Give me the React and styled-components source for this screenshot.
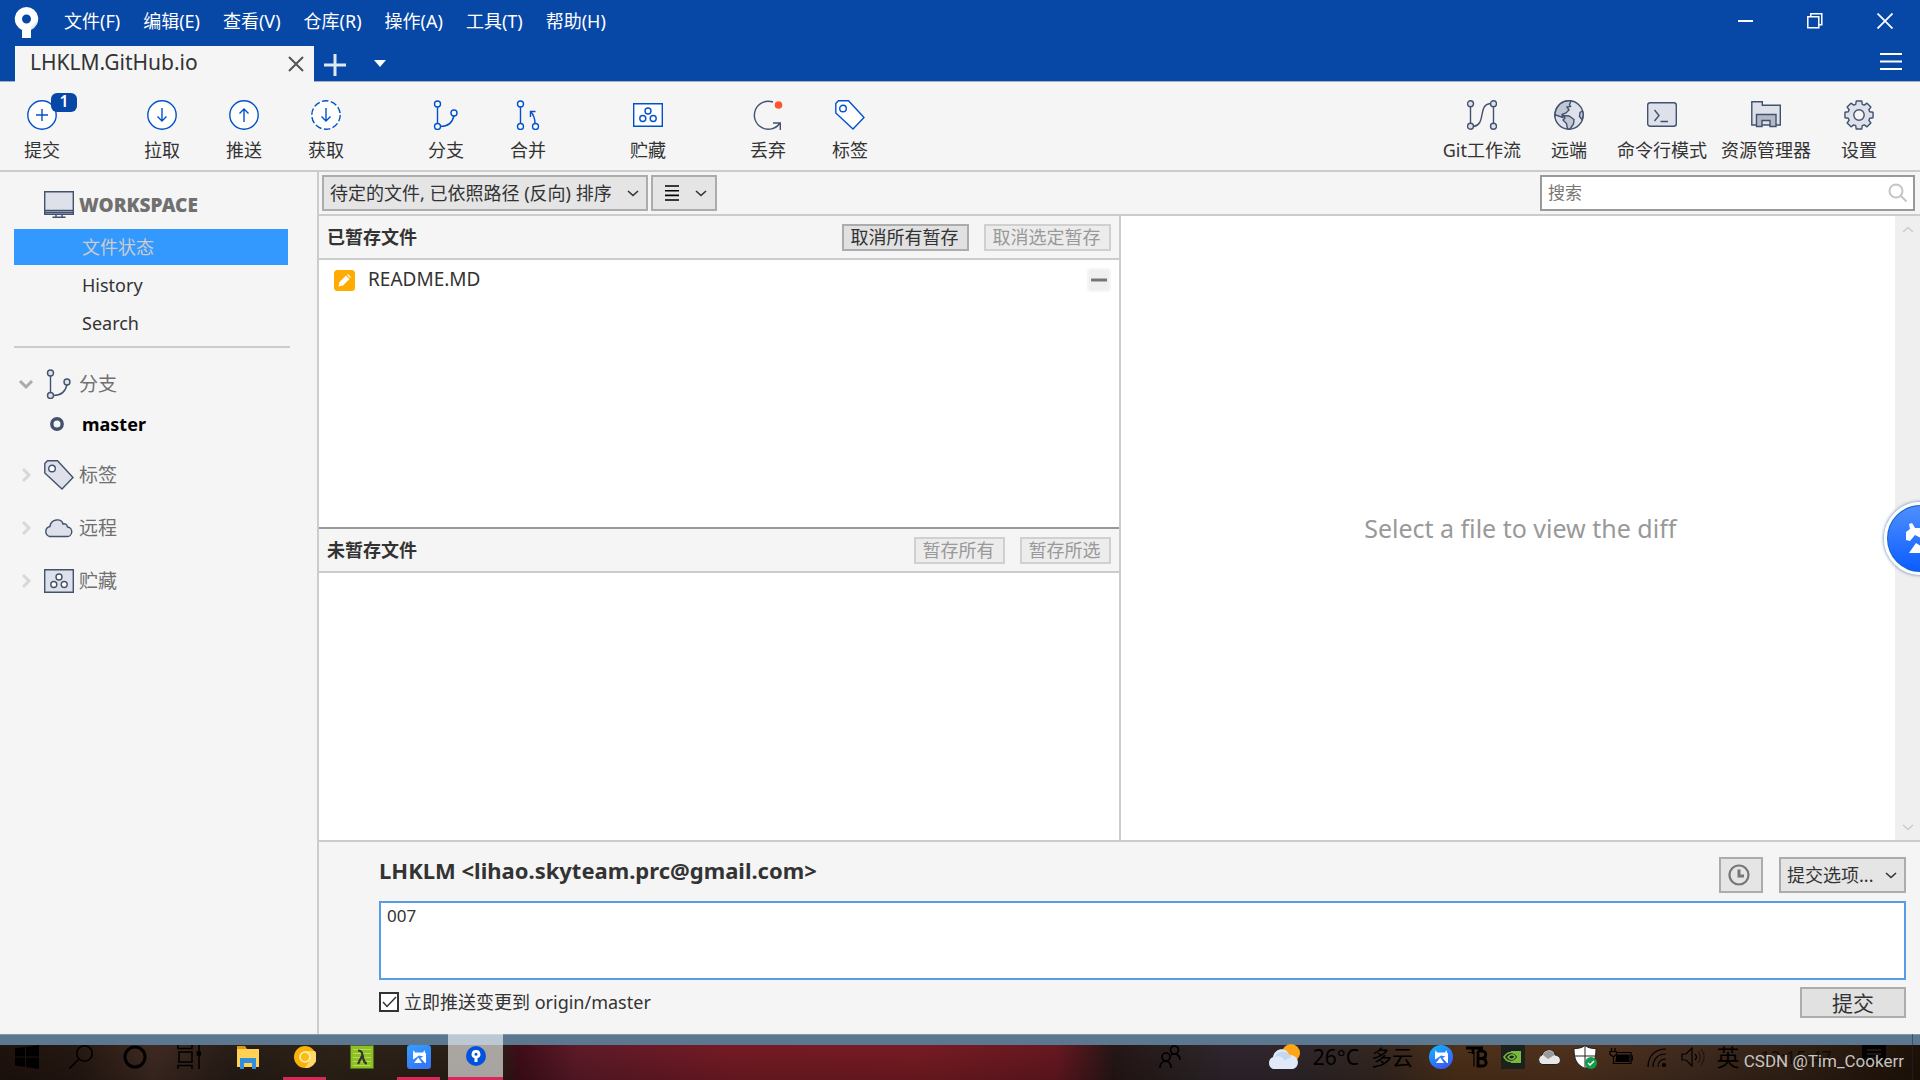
import React from "react";
import styled, { createGlobalStyle, css } from "styled-components";

const Global = createGlobalStyle`
  *, *::before, *::after { box-sizing: border-box; }
  html, body { margin: 0; padding: 0; }
  body, button, input, select, textarea {
    font-family: "Noto Sans", "Noto Sans CJK SC", sans-serif;
    font-size: 18px;
    line-height: 24px;
    color: #333;
  }
  svg { display: block; flex: none; }
`;

const BLUE = "#0052cc";
const SLATE = "#42526e";
const FILL = "#dee1e9";

const Screen = styled.div`
  position: relative;
  display: flex;
  flex-direction: column;
  min-height: 100vh;
  overflow: hidden;
  background: #f5f5f5;
`;

/* ---------- title bar ---------- */

const Header = styled.header`
  background: #0747a6;
  border-bottom: 1px solid #a5afc4;
`;

const TitleRow = styled.div`
  display: flex;
  align-items: center;
  height: 46px;
  padding-left: 14px;
`;

const Menu = styled.nav`
  display: flex;
  gap: 23px;
  margin: 0 auto 0 25px;
  padding-bottom: 4px;
`;

const MenuItem = styled.button`
  padding: 0;
  border: 0;
  background: none;
  color: #fff;
`;

const WindowButton = styled.button`
  display: flex;
  align-items: center;
  justify-content: center;
  width: 70px;
  height: 42px;
  margin-bottom: 4px;
  padding: 0;
  border: 0;
  background: none;
  color: #fff;
`;

const TabRow = styled.div`
  display: flex;
  height: 35px;
  padding: 0 15px;
`;

const Tab = styled.div`
  display: flex;
  align-items: center;
  justify-content: space-between;
  width: 299px;
  margin-bottom: -1px;
  padding: 0 10px 4px 15px;
  background: #f5f5f5;
  font-size: 21px;
`;

const IconButton = styled.button`
  display: flex;
  align-items: center;
  justify-content: center;
  width: ${(p) => p.$w || 24}px;
  padding: 0;
  border: 0;
  background: none;
  margin-left: ${(p) => (p.$push ? "auto" : "0")};
`;

/* ---------- toolbar ---------- */

const Toolbar = styled.div`
  display: flex;
  justify-content: space-between;
  height: 90px;
  padding: 0 20px 0 1px;
  border-bottom: 2px solid #ccc;
`;

const ToolGroups = styled.div`
  display: flex;
  gap: ${(p) => p.$gap || 0}px;
`;

const Tool = styled.button`
  position: relative;
  display: flex;
  flex-direction: column;
  align-items: center;
  gap: 8px;
  min-width: 82px;
  padding: 18px 7px 0;
  border: 0;
  background: none;
  white-space: nowrap;
`;

const Badge = styled.span`
  position: absolute;
  left: 50px;
  top: 11px;
  width: 26px;
  height: 19px;
  border-radius: 6px;
  background: #0747a6;
  color: #fff;
  font-size: 16px;
  font-weight: 600;
  line-height: 16px;
`;

/* ---------- body ---------- */

const Body = styled.div`
  display: flex;
  flex: 1;
`;

const Sidebar = styled.aside`
  flex: none;
  width: 319px;
  padding: 14px 27px 0 14px;
  border-right: 2px solid #ccc;
`;

const WorkspaceTitle = styled.h2`
  display: flex;
  align-items: center;
  gap: 5px;
  height: 37px;
  margin: 0 0 6px;
  padding-left: 30px;
  color: #707070;
  font-size: 19px;
  font-weight: 900;
`;

const WorkspaceItem = styled.button`
  display: block;
  width: 274px;
  height: 36px;
  margin-bottom: 2px;
  padding: 0 0 0 68px;
  border: 0;
  text-align: left;
  background: ${(p) => (p.$on ? "#3399ff" : "none")};
  color: ${(p) => (p.$on ? "#ccc" : "#333")};
`;

const Rule = styled.hr`
  height: 2px;
  margin: 5px 0 9px;
  border: 0;
  background: #ccc;
`;

const Group = styled.button`
  display: grid;
  grid-template-columns: 30px 30px auto;
  align-items: center;
  justify-content: start;
  width: 100%;
  height: 53px;
  padding: 0;
  border: 0;
  background: none;
  text-align: left;
  font-size: 19px;
  color: #707070;

  span { padding-left: 5px; }
`;

const Branch = styled.button`
  display: flex;
  align-items: center;
  gap: 18px;
  width: 100%;
  height: 38px;
  padding: 0 0 10px 36px;
  border: 0;
  background: none;
  color: #000;
  font-weight: 700;
`;

const Main = styled.main`
  display: flex;
  flex: 1;
  flex-direction: column;
  min-width: 0;
`;

const FilterBar = styled.div`
  display: flex;
  align-items: center;
  gap: 3px;
  height: 44px;
  padding: 0 5px 0 3px;
  border-bottom: 2px solid #ccc;
`;

const SelectBox = styled.div`
  position: relative;
  width: ${(p) => p.$w}px;

  select {
    appearance: none;
    width: 100%;
    height: 36px;
    padding: 0 0 1px 6px;
    border: 2px solid #acacac;
    border-radius: 0;
    background: #e5e5e5;
    white-space: nowrap;
  }
  svg {
    position: absolute;
    right: 9px;
    top: 15px;
    pointer-events: none;
  }
`;

const greyBox = css`
  display: flex;
  align-items: center;
  border: 2px solid #acacac;
  background: #e5e5e5;
`;

const ViewButton = styled.button`
  ${greyBox}
  justify-content: space-between;
  width: 66px;
  height: 36px;
  padding: 0 8px 0 12px;
`;

const SearchBox = styled.div`
  display: flex;
  align-items: center;
  width: 375px;
  height: 36px;
  margin-left: auto;
  padding: 0 5px 0 6px;
  border: 2px solid #999;
  background: #fff;

  input {
    flex: 1;
    min-width: 0;
    padding: 0;
    border: 0;
    outline: 0;
    background: none;
    font-size: 17px;
  }
  input::placeholder { color: #777; opacity: 1; }
`;

const Panes = styled.div`
  display: grid;
  grid-template-columns: minmax(0, 1fr) 2px minmax(0, 1fr);
  flex: 1;
`;

const Divider = styled.div`
  background: #ccc;
`;

const Files = styled.div`
  display: flex;
  flex-direction: column;
`;

const FileSection = styled.section`
  display: flex;
  flex: 1 1 0;
  flex-direction: column;
  background: #fff;

  & + & { border-top: 2px solid #999; }
`;

const SectionHead = styled.div`
  display: flex;
  align-items: center;
  gap: 15px;
  height: 44px;
  padding: 0 8px;
  border-bottom: 2px solid #ccc;
  background: #f5f5f5;

  h3 {
    margin: 0 auto 0 0;
    font-size: 18px;
    font-weight: 700;
  }
`;

const SmallButton = styled.button`
  height: 27px;
  padding: 0 8px 0 7px;
  border: 2px solid #acacac;
  background: #e1e1e1;
  line-height: 21px;

  &:disabled {
    border-color: #d0d0d0;
    background: #ececec;
    color: #999;
  }
`;

const FileRow = styled.div`
  display: flex;
  align-items: center;
  height: 40px;
  padding: 0 8px 0 15px;
  gap: 13px;
  font-size: 19px;

  button {
    display: flex;
    align-items: center;
    justify-content: center;
    width: 24px;
    height: 24px;
    margin-left: auto;
    padding: 0;
    border: 2px solid #f5f5f5;
    border-radius: 4px;
    background: #efefef;
  }
`;

const FileName = styled.span`
  padding-bottom: 2px;
`;

const Diff = styled.section`
  display: flex;
  align-items: stretch;
  background: #fff;
`;

const DiffText = styled.p`
  flex: 1;
  align-self: center;
  margin: 0;
  padding-left: 25px;
  text-align: center;
  color: #999;
  font-size: 25px;
`;

const ScrollTrack = styled.div`
  display: flex;
  flex-direction: column;
  align-items: center;
  justify-content: space-between;
  width: 25px;
  padding: 10px 0 9px;
  background: #efefef;
`;

/* ---------- commit panel ---------- */

const Commit = styled.form`
  padding: 15px 14px 16px 60px;
  border-top: 2px solid #ccc;
`;

const CommitHead = styled.div`
  display: flex;
  align-items: center;
  gap: 16px;

  h3 {
    margin: 0 auto 0 0;
    padding-bottom: 10px;
    font-size: 22px;
    font-weight: 700;
  }
`;

const ClockButton = styled.button`
  ${greyBox}
  justify-content: center;
  width: 44px;
  height: 36px;
  padding: 0 5px 0 0;
`;

const Message = styled.textarea`
  display: block;
  width: 100%;
  height: 79px;
  margin: 8px 0 7px;
  padding: 1px 6px;
  border: 2px solid #569de5;
  border-radius: 0;
  outline: 0;
  resize: none;
  background: #fff;
  font-size: 17px;
`;

const CommitFoot = styled.div`
  display: flex;
  align-items: center;
  justify-content: space-between;
`;

const PushOption = styled.label`
  display: flex;
  align-items: center;
  gap: 5px;
  padding-bottom: 2px;
`;

const CheckWrap = styled.span`
  position: relative;
  display: flex;

  input {
    appearance: none;
    width: 20px;
    height: 20px;
    margin: 0;
    border: 2px solid #333;
    background: #fff;
  }
  svg {
    position: absolute;
    left: 0;
    top: 0;
    pointer-events: none;
  }
  input:not(:checked) + svg { display: none; }
`;

const SubmitButton = styled.button`
  width: 106px;
  height: 31px;
  padding: 0;
  border: 2px solid #acacac;
  background: #e1e1e1;
  font-size: 21px;
`;

/* ---------- desktop ---------- */

const Taskbar = styled.footer`
  display: flex;
  justify-content: space-between;
  height: 46px;
  background:
    linear-gradient(#8199b0 0 1px, #5b7890 1px) top / 100% 11px no-repeat,
    linear-gradient(rgba(0, 0, 0, 0.1), rgba(0, 0, 0, 0.3)),
    linear-gradient(90deg, #24160f 0, #2c1c15 4%, #4a3128 8%, #30221b 12%, #35281b 17%,
      #33251a 26%, #4a0f1c 27%, #6e1f30 30%, #8a1f2b 38%, #8c2029 48%, #7a1c26 55%,
      #2d1a1a 58%, #33292a 62%, #392c38 64%, #382d31 68%, #3f2e26 72%, #5c3a1e 76%,
      #5e3a22 82%, #4d3325 88%, #3c281a 93%, #241509 100%);
`;

const TaskItems = styled.div`
  display: flex;
  gap: 2px;
`;

const SystemItems = styled.div`
  display: flex;
  margin-right: 2px;
`;

const TaskButton = styled.button`
  display: flex;
  align-items: center;
  justify-content: center;
  width: ${(p) => p.$w || 55}px;
  padding: 0;
  border: 0;
  color: #000;
  background: ${(p) => (p.$active ? "rgba(255, 255, 255, 0.6)" : "none")};
  border-bottom: ${(p) => (p.$active ? "3px solid #d6285a" : "0")};
  ${(p) => p.$running && css`
    background: linear-gradient(#d6285a, #d6285a) bottom / 43px 3px no-repeat;
  `}
`;

const Tray = styled.div`
  display: flex;
  align-items: center;
  color: #000;
`;

const Weather = styled.button`
  display: flex;
  align-items: center;
  gap: 12px;
  margin: 0 10px 0 86px;
  padding: 0;
  border: 0;
  background: none;
  color: #000;
  font-size: 21px;
`;

const Ime = styled.span`
  width: 34px;
  text-align: center;
  font-size: 23px;
`;

const Clock = styled.time`
  width: 102px;
  text-align: center;
  opacity: 0.6;
`;

const ShowDesktop = styled.div`
  align-self: stretch;
  width: 8px;
  margin-left: 11px;
  border-left: 1px solid rgba(30, 40, 60, 0.5);
`;

const Watermark = styled.span`
  position: absolute;
  right: 16px;
  bottom: 7px;
  color: rgba(255, 255, 255, 0.75);
  font-family: Roboto, sans-serif;
  font-size: 17px;
`;

const Assistant = styled.button`
  position: absolute;
  right: -37px;
  top: 502px;
  width: 73px;
  height: 73px;
  padding: 0;
  border: 3px solid #fff;
  border-radius: 50%;
  background: linear-gradient(#4f8fff, #0a5cff);
  box-shadow: 0 0 3px 1px #8fa8c8, inset 0 0 0 1px #1268c8;
`;

/* ---------- drawings ---------- */

const Svg = ({ w = 30, h = w, box, children, ...rest }) => (
  <svg width={w} height={h} viewBox={box || `0 0 ${w} ${h}`} fill="none" aria-hidden="true" {...rest}>
    {children}
  </svg>
);

const Line = ({ color = BLUE, children, width = 1.4, ...r }) => (
  <Svg stroke={color} strokeWidth={width} {...r}>{children}</Svg>
);

const CommitIcon = () => (
  <Line><circle cx="15" cy="15" r="14.2" fill="#fff" /><path d="M15 9v12M9 15h12" /></Line>
);
const PullIcon = () => (
  <Line><circle cx="15" cy="15" r="14.2" fill="#fff" /><path d="M15 8v13M10.5 16.5 15 21l4.5-4.5" /></Line>
);
const PushIcon = () => (
  <Line><circle cx="15" cy="15" r="14.2" fill="#fff" /><path d="M15 22V9M10.5 13.5 15 9l4.5 4.5" /></Line>
);
const FetchIcon = () => (
  <Line>
    <circle cx="15" cy="15" r="14.2" fill="#fff" strokeDasharray="6.5 2.42" />
    <path d="M15 8v13M10.5 16.5 15 21l4.5-4.5" />
  </Line>
);
const BranchIcon = ({ color = BLUE, fill = "#fff" }) => (
  <Line color={color}>
    <path d="M6.500 7v16M9.5 26.5c8 0 12-4 13.5-11" />
    <circle cx="6.5" cy="4" r="3" fill={fill} />
    <circle cx="6.5" cy="26.5" r="3" fill={fill} />
    <circle cx="23" cy="13" r="3" fill={fill} />
  </Line>
);
const MergeIcon = () => (
  <Line>
    <path d="M7.5 7v16M22 23.5c0-5-1.5-9-4.5-12M17.5 17v-5.500h5" />
    <circle cx="7.5" cy="4" r="3" fill="#fff" />
    <circle cx="7.5" cy="26.5" r="3" fill="#fff" />
    <circle cx="22.5" cy="26.5" r="3" fill="#fff" />
  </Line>
);
const StashIcon = ({ color = BLUE, fill = "#fff" }) => (
  <Line color={color}>
    <path d="M.7 3.700h28.6v22.6H.7z" fill={fill} />
    <circle cx="15" cy="11" r="3" fill="#fff" />
    <circle cx="9.8" cy="18.5" r="3" fill="#fff" />
    <circle cx="20.2" cy="18.5" r="3" fill="#fff" />
  </Line>
);
const DiscardIcon = () => (
  <Line color={SLATE}>
    <path d="M20 2a14 14 0 1 0 7 21M20 23h7.3v7" />
    <circle cx="25.5" cy="5" r="3.8" fill="#ff5630" stroke="none" />
  </Line>
);
const TagIcon = ({ color = BLUE, fill = "#fff" }) => (
  <Line color={color}>
    <path d="M.8 3.500 3.500.8h10L29 17.500 18 29 .8 13z" fill={fill} />
    <circle cx="8" cy="8.5" r="3.300" fill="#fff" />
  </Line>
);
const FlowIcon = () => (
  <Line color={SLATE}>
    <path d="M3.500 7v16M26.500 7v16M6.500 26.500C20 24 10 5 23.500 3.500" />
    <circle cx="3.500" cy="3.800" r="3" fill={FILL} />
    <circle cx="3.500" cy="26.200" r="3" fill={FILL} />
    <circle cx="26.500" cy="3.800" r="3" fill={FILL} />
    <circle cx="26.500" cy="26.200" r="3" fill={FILL} />
  </Line>
);
const GlobeIcon = () => (
  <Line color={SLATE}>
    <circle cx="15" cy="15" r="14.2" fill={FILL} />
    <path fill="#c1c8d4" d="M6 4c3-2.500 7-3.500 11-3l-1.500 3.500 1 2-3.500.5 2 3-3 3-4 1.500.5 3-6.500-2.500L.8 16C1 11 3 7 6 4zM9 15.500l6 .5 5 3.500-.5 4.500-3.500 5-2.500-.2-1-5.300L9 20l2-2zM28.500 11l-2.500 1.500-.5 4 2.500 3c1.500-3 1.500-5.500.5-8.500z" />
  </Line>
);
const TerminalIcon = () => (
  <Line color={SLATE}>
    <rect x=".7" y="2.7" width="28.6" height="23.6" rx="2.5" fill={FILL} />
    <path d="m7.500 10 4.500 5.500-4.500 5.500M13.500 21.500H21" />
  </Line>
);
const ExplorerIcon = () => (
  <Line color={SLATE}>
    <path d="M.8 25V1.800h10.500v3.500h18V25z" fill={FILL} />
    <path d="M5.500 26.500v-12H25v12h-6v-6h-8v6z" fill="#b3bac5" />
  </Line>
);
const GearIcon = () => {
  const d = Array.from({ length: 8 }, (_, i) => {
    const pt = (r, deg) => {
      const a = ((i * 45 + deg) * Math.PI) / 180;
      return `${(15 + r * Math.sin(a)).toFixed(2)} ${(15 - r * Math.cos(a)).toFixed(2)}`;
    };
    return `${i ? "L" : "M"}${pt(11.2, -17)}L${pt(14.3, -11)}L${pt(14.3, 11)}L${pt(11.2, 17)}`;
  }).join("");
  return (
    <Line color={SLATE}>
      <path d={`${d}Z`} fill={FILL} strokeLinejoin="round" />
      <circle cx="15" cy="15" r="5.2" fill="#f5f5f5" />
    </Line>
  );
};
const MonitorIcon = () => (
  <Line color={SLATE}>
    <path d="M.7 1.700h28.600v22.600H.7z" fill={FILL} />
    <path d="M1 20.500h28M1 22.500h28M12 24v3M18 24v3M8.500 27.300h13" />
  </Line>
);
const CloudIcon = () => (
  <Line color={SLATE}>
    <path d="M5.500 23.500h17a4.500 4.500 0 0 0 1-9.500C23 11 20.500 10.500 19 11 17.500 5 7 5.500 6 13.500c-5 1-6 8-.5 10z" fill={FILL} />
  </Line>
);
const Chevron = ({ open }) => (
  <Svg w={30} h={16} stroke={open ? "#aaa" : "#d8d8d8"} strokeWidth="3">
    <path d={open ? "M6 5l6 6 6-6" : "M9 2l6 6-6 6"} />
  </Svg>
);
const DropArrow = () => <Line w={12} h={7} color="#333" width={1.6}><path d="m1 1 5 4.500L11 1" /></Line>;

const DogFace = ({ size = 24, round }) => {
  const id = round ? "dogRound" : "dogSquare";
  return (
    <Svg w={size} box="0 0 24 24">
      <defs>
        <linearGradient id={id} x1="0" y1="0" x2=".5" y2="1">
          <stop stopColor={round ? "#10b8ff" : "#34a0ff"} />
          <stop offset="1" stopColor={round ? "#3a5cf5" : "#3478f6"} />
        </linearGradient>
      </defs>
      <rect width="24" height="24" rx={round ? 12 : 3} fill={`url(#${id})`} />
      <path fill="#fff" d="M6.500 5 8 7.500h8L17.500 5l.5 2.500 1 1V18h-1l-4.500-5 3-1.500L12 10.500 8.500 13 6 14.500V8.500zM7 18l4.200-5.500L15 18z" />
    </Svg>
  );
};

const commitTools = [
  [["提交", CommitIcon, 1]],
  [["拉取", PullIcon], ["推送", PushIcon], ["获取", FetchIcon]],
  [["分支", BranchIcon], ["合并", MergeIcon]],
  [["贮藏", StashIcon]],
  [["丢弃", DiscardIcon], ["标签", TagIcon]],
];
const sideTools = [
  ["Git工作流", FlowIcon], ["远端", GlobeIcon], ["命令行模式", TerminalIcon],
  ["资源管理器", ExplorerIcon], ["设置", GearIcon],
];
const menus = ["文件(F)", "编辑(E)", "查看(V)", "仓库(R)", "操作(A)", "工具(T)", "帮助(H)"];

const ToolButton = ({ item: [label, Icon, count] }) => (
  <Tool type="button"><Icon />{label}{count && <Badge>{count}</Badge>}</Tool>
);

const SideGroup = ({ label, open, children }) => (
  <Group type="button" aria-expanded={!!open}><Chevron open={open} />{children}<span>{label}</span></Group>
);

export default function App() {
  return (
    <Screen>
      <Global />
      <Header>
        <TitleRow>
          <Svg w={25} h={32}>
            <defs>
              <linearGradient id="logoShade" x1=".5" y1=".2" x2="1" y2=".9">
                <stop offset=".5" stopColor="#fff" /><stop offset="1" stopColor="#6f95d0" />
              </linearGradient>
            </defs>
            <path fill="url(#logoShade)" fillRule="evenodd" d="M12.500 0a12 12 0 0 1 4.500 23V31H8V23A12 12 0 0 1 12.500 0zm0 7.500a4.500 4.500 0 1 0 0 9 4.500 4.500 0 0 0 0-9z" />
            <path fill="#fff" d="M8 20h9v11H8z" />
          </Svg>
          <Menu>{menus.map((m) => <MenuItem type="button" key={m}>{m}</MenuItem>)}</Menu>
          <WindowButton type="button" aria-label="Minimize"><Line w={16} color="#fff" width={2}><path d="M1 8h15" /></Line></WindowButton>
          <WindowButton type="button" aria-label="Restore">
            <Line w={16} color="#fff" width={1.5}><path d="M.8 3.800h11v11h-11zM3.800 3.800v-3h11v11h-3" /></Line>
          </WindowButton>
          <WindowButton type="button" aria-label="Close"><Line w={16} color="#fff" width={1.8}><path d="m.5.5 15 15M15.500.5l-15 15" /></Line></WindowButton>
        </TitleRow>
        <TabRow>
          <Tab>
            LHKLM.GitHub.io
            <IconButton type="button" $w={16} aria-label="Close tab">
              <Line w={16} h={20} color="#555" width={2}><path d="m1 5 14 14M15 5 1 19" /></Line>
            </IconButton>
          </Tab>
          <IconButton type="button" $w={42} aria-label="New tab"><Line w={22} h={24} color="#dfe8f5" width={3}><path d="M11 2v22M0 13h22" /></Line></IconButton>
          <IconButton type="button" $w={48} aria-label="Tab list"><Svg w={12} h={7}><path d="M0 0h12L6 7z" fill="#fff" /></Svg></IconButton>
          <IconButton type="button" $w={28} $push aria-label="Options">
            <Line w={22} h={26} color="#fff" width={2}><path d="M0 3h22M0 10.500h22M0 18h22" /></Line>
          </IconButton>
        </TabRow>
      </Header>

      <Toolbar>
        <ToolGroups $gap={38}>
          {commitTools.map((group) => (
            <ToolGroups key={group[0][0]}>{group.map((t) => <ToolButton item={t} key={t[0]} />)}</ToolGroups>
          ))}
        </ToolGroups>
        <ToolGroups>{sideTools.map((t) => <ToolButton item={t} key={t[0]} />)}</ToolGroups>
      </Toolbar>

      <Body>
        <Sidebar>
          <WorkspaceTitle><MonitorIcon />WORKSPACE</WorkspaceTitle>
          <WorkspaceItem type="button" $on>文件状态</WorkspaceItem>
          <WorkspaceItem type="button">History</WorkspaceItem>
          <WorkspaceItem type="button">Search</WorkspaceItem>
          <Rule />
          <SideGroup label="分支" open><BranchIcon color={SLATE} fill={FILL} /></SideGroup>
          <Branch type="button">
            <Svg w={14}><circle cx="7" cy="7" r="5.2" stroke={SLATE} strokeWidth="3.4" /></Svg>master
          </Branch>
          <SideGroup label="标签"><TagIcon color={SLATE} fill={FILL} /></SideGroup>
          <SideGroup label="远程"><CloudIcon /></SideGroup>
          <SideGroup label="贮藏"><StashIcon color={SLATE} fill={FILL} /></SideGroup>
        </Sidebar>

        <Main>
          <FilterBar>
            <SelectBox $w={326}>
              <select aria-label="Sort order"><option>待定的文件, 已依照路径 (反向) 排序</option></select>
              <DropArrow />
            </SelectBox>
            <ViewButton type="button" aria-label="View mode">
              <Line w={14} h={16} color="#000" width={1.6}><path d="M0 1h14M0 5.700h14M0 10.400h14M0 15h14" /></Line>
              <DropArrow />
            </ViewButton>
            <SearchBox>
              <input type="text" placeholder="搜索" aria-label="搜索" />
              <Line w={20} color="#c4c4c4" width={2}><circle cx="8" cy="8" r="6.5" /><path d="m12.500 12.500 6 6" /></Line>
            </SearchBox>
          </FilterBar>

          <Panes>
            <Files>
              <FileSection>
                <SectionHead>
                  <h3>已暂存文件</h3>
                  <SmallButton type="button">取消所有暂存</SmallButton>
                  <SmallButton type="button" disabled>取消选定暂存</SmallButton>
                </SectionHead>
                <FileRow>
                  <Svg w={21}>
                    <rect width="21" height="21" rx="3.5" fill="#ffab00" />
                    <path fill="#fff" d="m4.500 16.500 1-4.500 6.500-6.500 3.500 3.500L9 15.500zM13 4.800l1-.8 3 3-1 1z" />
                  </Svg>
                  <FileName>README.MD</FileName>
                  <button type="button" aria-label="Unstage file"><Line w={16} h={4} color="#777" width={3}><path d="M0 2h16" /></Line></button>
                </FileRow>
              </FileSection>
              <FileSection>
                <SectionHead>
                  <h3>未暂存文件</h3>
                  <SmallButton type="button" disabled>暂存所有</SmallButton>
                  <SmallButton type="button" disabled>暂存所选</SmallButton>
                </SectionHead>
              </FileSection>
            </Files>
            <Divider />
            <Diff>
              <DiffText>Select a file to view the diff</DiffText>
              <ScrollTrack>
                <Line w={12} h={7} color="#ccc" width={1.6}><path d="m1 6 5-4.500L11 6" /></Line>
                <Line w={12} h={7} color="#ccc" width={1.6}><path d="m1 1 5 4.500L11 1" /></Line>
              </ScrollTrack>
            </Diff>
          </Panes>

          <Commit onSubmit={(e) => e.preventDefault()}>
            <CommitHead>
              <h3>LHKLM &lt;lihao.skyteam.prc@gmail.com&gt;</h3>
              <ClockButton type="button" aria-label="Recent messages">
                <Line w={22} color="#777" width={2.2}><circle cx="11" cy="11" r="9.5" /><path d="M11 5.500V12h5" strokeWidth="3" /></Line>
              </ClockButton>
              <SelectBox $w={127}>
                <select aria-label="Commit options"><option>提交选项...</option></select>
                <DropArrow />
              </SelectBox>
            </CommitHead>
            <Message defaultValue="007" aria-label="Commit message" />
            <CommitFoot>
              <PushOption>
                <CheckWrap>
                  <input type="checkbox" defaultChecked />
                  <Line w={20} color="#333" width={1.5}><path d="m4 10 4 4.500L17 5" /></Line>
                </CheckWrap>
                立即推送变更到 origin/master
              </PushOption>
              <SubmitButton type="submit">提交</SubmitButton>
            </CommitFoot>
          </Commit>
        </Main>
      </Body>

      <Taskbar>
        <TaskItems>
          <SystemItems>
            <TaskButton $w={54} type="button" aria-label="Start">
              <Svg w={24}><path fill="#000" d="M0 3.500 10 2v9.500H0zM11 2l13-2v11.500H11zM0 12.500h10V22L0 20.500zM11 12.500h13V24l-13-2z" /></Svg>
            </TaskButton>
            <TaskButton $w={54} type="button" aria-label="Search">
              <Line w={24} color="#000" width={1.6}><circle cx="15.5" cy="8.5" r="7.7" /><path d="M10 14 0 24" /></Line>
            </TaskButton>
            <TaskButton $w={54} type="button" aria-label="Assistant">
              <Line w={24} color="#000" width={3}><circle cx="12" cy="12" r="10" /></Line>
            </TaskButton>
            <TaskButton $w={54} type="button" aria-label="Task view">
              <Line w={24} color="#000" width={1.5}><path d="M1 0v3.500h14V0M2 7h13v10H2zM1 24v-3.500h14V24M22 0v24" /><path d="M20.500 7h3v3h-3z" fill="#000" /></Line>
            </TaskButton>
          </SystemItems>
          <TaskButton type="button" aria-label="File Explorer">
            <Svg w={24}>
              <path fill="#e09a10" d="M1 1h8l2 3v4H1z" /><path fill="#ffd257" d="M1 4h22v18H1z" />
              <path fill="#2f8fdc" d="M4 13h16v11h-4v-6H8v6H4z" />
            </Svg>
          </TaskButton>
          <TaskButton type="button" $running aria-label="Browser">
            <Svg w={22}>
              <circle cx="11" cy="11" r="11" fill="#f9b208" /><path fill="#ffd866" d="M11 5h10a11 11 0 0 1-10 17l5-8z" />
              <circle cx="11" cy="11" r="5" fill="#fbbc14" stroke="#fff1c4" strokeWidth="1.5" />
            </Svg>
          </TaskButton>
          <TaskButton type="button" aria-label="Terminal emulator">
            <Svg w={24}>
              <path fill="#8fbf21" stroke="#4c6b2c" d="M.5.5h23v23H.5z" />
              <path stroke="#b4dc5a" d="M3 4.500h18M3 8.500h18M3 12.500h18M3 16.500h18M3 20.500h18" />
              <path stroke="#333" strokeWidth="2.2" d="M8 5.500c4 0 4 2 5 7s2 6 4 6M12.500 10 8 19" />
            </Svg>
          </TaskButton>
          <TaskButton type="button" $running aria-label="Bird"><DogFace /></TaskButton>
          <TaskButton type="button" $active aria-label="Sourcetree">
            <Svg w={20}>
              <circle cx="10" cy="10" r="10" fill="#0052e0" />
              <path fill="#fff" fillRule="evenodd" d="M10 4a4.200 4.200 0 0 1 1.500 8.200V16h-3v-3.800A4.200 4.200 0 0 1 10 4zm0 2.800a1.500 1.500 0 1 0 0 3 1.500 1.500 0 0 0 0-3z" />
            </Svg>
          </TaskButton>
        </TaskItems>

        <Tray>
          <Line w={22} h={24} color="#000" width={1.7}>
            <circle cx="7" cy="12" r="4" /><path d="M1 23c0-9 11-9 11 0" />
            <circle cx="15.5" cy="5" r="4" /><path d="M12 10c4-3 9 0 9 5" />
          </Line>
          <Weather type="button">
            <Svg w={34} h={26}>
              <circle cx="24" cy="9" r="9" fill="#ffa617" />
              <path fill="#dfe9f8" d="M6 25a6.500 6.500 0 0 1 0-12C8 3 20 3 22 11c10-1 12 12 4 14z" />
              <path fill="#c4d6f0" d="M8 13c5-2 9 1 10 4 2-3 4-3 6-3-1-7-13-9-16-1z" />
            </Svg>
            <span>26°C</span><span>多云</span>
          </Weather>
          <TaskButton $w={36} type="button" aria-label="Assistant tray"><DogFace round /></TaskButton>
          <TaskButton $w={36} type="button" aria-label="TB">
            <Line w={24} color="#000" width={2.8}><path d="M1 3h17M8 3v6M13 6v15h4c6 0 5-7 0-7.500 5-.5 5-7.500 0-7.500h-4M13 13.500h4" /><path d="M3 7.500h6v14" strokeWidth="1.2" /></Line>
          </TaskButton>
          <TaskButton $w={36} type="button" aria-label="Graphics">
            <Svg w={24}>
              <path fill="#1d211e" d="M0 0h24v24H0z" /><path fill="#76b93f" d="M10 6h10v12H10z" />
              <path stroke="#76b93f" strokeWidth="1.5" fill="#1d211e" d="M3 12c4-6 10-6 14 0-4 6-10 6-14 0z" />
              <path stroke="#76b93f" strokeWidth="1.5" d="M7 12c2-3 6-3 7 0-2 3-5 3-7 0z" />
            </Svg>
          </TaskButton>
          <TaskButton $w={36} type="button" aria-label="Cloud storage">
            <Svg w={24} h={18}>
              <path fill="#e6e6e6" stroke="#222" d="M5 16.500a5 5 0 0 1 0-9.500c3-7 12-7 13 0 7 1 7 9 1 9.500z" />
              <path fill="#999" d="M6 7c3-6 10-5 11.500 0L11 11z" />
            </Svg>
          </TaskButton>
          <TaskButton $w={36} type="button" aria-label="Security">
            <Svg w={24}>
              <path fill="#fff" stroke="#222" d="M12 .5C9 3 5 3.500 1 3.500c0 10 2 16 11 20 9-4 11-10 11-20-4 0-8-.5-11-3z" />
              <path stroke="#222" d="M12 1v22M1 11h22" />
              <circle cx="18" cy="18" r="6" fill="#129a4a" /><path stroke="#fff" strokeWidth="1.5" d="m15 18 2 2 4-4" />
            </Svg>
          </TaskButton>
          <TaskButton $w={36} type="button" aria-label="Battery">
            <Line w={24} h={18} color="#000" width={1.2}><path d="M8 4.500h14v11H4.500V9M22 8h1.500v4H22M2.500 0v3M6 0v3M1 3.500h6.500v3L4.500 9 1 6.500z" /><path d="M8 7h12v6.500H7z" fill="#000" /></Line>
          </TaskButton>
          <TaskButton $w={36} type="button" aria-label="Network">
            <Line w={22} color="#000" width={1.2}><path d="M2 21C2 10 9 3 20 3M7 21c0-8 5-13 13-13M12 21c0-5 3-8 8-8" /><circle cx="18" cy="19" r="1.5" fill="#000" /></Line>
          </TaskButton>
          <TaskButton $w={36} type="button" aria-label="Volume">
            <Line w={24} h={20} color="#000" width={1.2}><path d="M1 7h4l6-6v18l-6-6H1zM14 7c2 2 2 4 0 6" /><path opacity=".5" d="M17 4c3 4 3 8 0 12M20 2c4 5 4 11 0 16" /></Line>
          </TaskButton>
          <Ime>英</Ime>
          <Clock>12:15:47</Clock>
          <TaskButton $w={54} type="button" aria-label="Notifications">
            <Svg w={24}><path fill="#050302" d="M0 0h24v18h-7l-5 5v-5H0z" /><path stroke="#3a2c22" d="M5 5h14M5 9h14M5 13h9" /></Svg>
          </TaskButton>
          <ShowDesktop />
        </Tray>
      </Taskbar>

      <Watermark>CSDN @Tim_Cookerr</Watermark>
      <Assistant type="button" aria-label="Floating assistant">
        <Svg w={67} h={67}>
          <path fill="#fff" d="M22 19l3-1 3 5h12l3-5 3 1-1 5 4 3v8l-4 1-5-6-6 3-6-3-5 6-4-1v-8l4-3zM22 48l7-10 5 3 5-3 7 10z" />
        </Svg>
      </Assistant>
    </Screen>
  );
}
